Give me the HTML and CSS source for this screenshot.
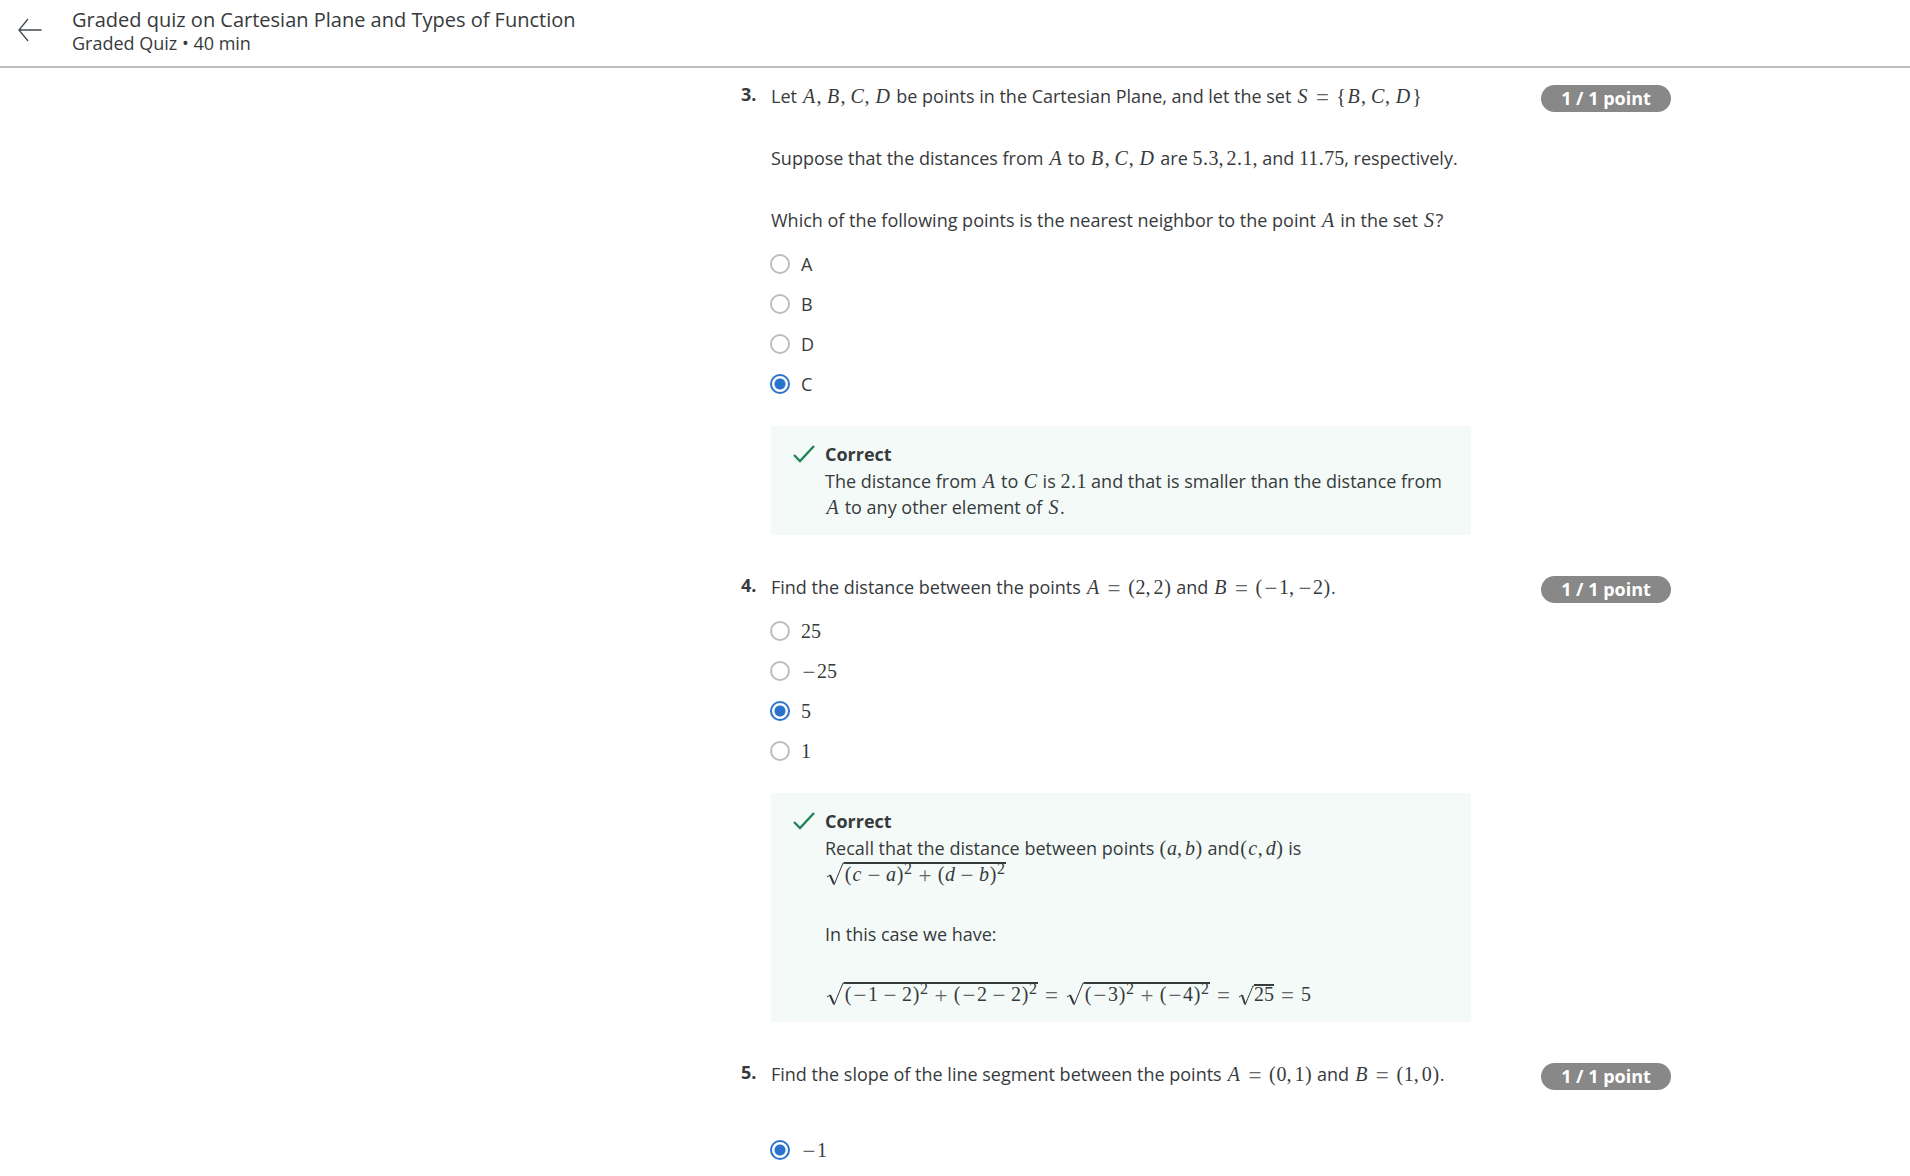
FILE: index.html
```html
<!DOCTYPE html>
<html lang="en">
<head>
<meta charset="utf-8">
<meta name="viewport" content="width=device-width, initial-scale=1">
<title>Graded quiz on Cartesian Plane and Types of Function</title>
<link rel="stylesheet" href="styles.css">
</head>
<body>
<header class="topbar">
  <button class="back" type="button" aria-label="Back">
    <svg width="24" height="28" viewBox="0 0 24 28" fill="none" stroke="#444b52" stroke-width="1.3"><path d="M23.500 14H1M10 3L1 14L10 25"/></svg>
  </button>
  <div>
    <h1 class="title">Graded quiz on Cartesian Plane and Types of Function</h1>
    <p class="subtitle">Graded Quiz • 40 min</p>
  </div>
</header>

<main class="page">
  <div class="quiz">
    <section class="question">
      <div class="number">3.</div>
      <div class="body">
        <div class="prompt">
          <p>Let <span class="math"><i>A</i><b>,</b><i>B</i><b>,</b><i>C</i><b>,</b><i class="wide">D</i></span> be points in the Cartesian Plane, and let the set <span class="math"><i class="slim">S</i><span class="rel">=</span><span class="brace">{</span><i>B</i><b>,</b><i>C</i><b>,</b><i class="wide">D</i><span class="brace">}</span></span></p>
          <p>Suppose that the distances from <span class="math"><i>A</i></span> to <span class="math"><i>B</i><b>,</b><i>C</i><b>,</b><i class="wide">D</i></span> are <span class="math">5<span class="dot">.</span>3<b>,</b>2<span class="dot">.</span>1,</span> and <span class="math">11<span class="dot">.</span>75</span>, respectively.</p>
          <p>Which of the following points is the nearest neighbor to the point <span class="math"><i>A</i></span> in the set <span class="math"><i class="slim">S</i></span>?</p>
        </div>
        <div class="options">
          <label class="option"><input type="radio" name="q3"><span>A</span></label>
          <label class="option"><input type="radio" name="q3"><span>B</span></label>
          <label class="option"><input type="radio" name="q3"><span>D</span></label>
          <label class="option"><input type="radio" name="q3" checked><span>C</span></label>
        </div>
        <div class="feedback">
          <svg class="check" width="22" height="18" viewBox="0 0 22 18" fill="none" stroke="#1f8354" stroke-width="2.300"><path d="M1 10L7 16L21 1"/></svg>
          <div>
            <h2 class="verdict">Correct</h2>
            <p>The distance from <span class="math"><i>A</i></span> to <span class="math"><i>C</i></span> is <span class="math">2<span class="dot">.</span>1</span> and that is smaller than the distance from <span class="math"><i>A</i></span> to any other element of <span class="math"><i class="slim">S</i></span>.</p>
          </div>
        </div>
      </div>
      <div class="points">1 / 1 point</div>
    </section>

    <section class="question">
      <div class="number">4.</div>
      <div class="body">
        <div class="prompt">
          <p>Find the distance between the points <span class="math"><i>A</i><span class="rel">=</span><span class="par">(</span>2<b>,</b>2<span class="par">)</span></span> and <span class="math"><i>B</i><span class="rel">=</span><span class="par">(</span><span class="neg">−</span>1<b>,</b><span class="neg">−</span>2<span class="par">)</span></span>.</p>
        </div>
        <div class="options">
          <label class="option"><input type="radio" name="q4"><span class="math">25</span></label>
          <label class="option"><input type="radio" name="q4"><span class="math"><span class="neg">−</span>25</span></label>
          <label class="option"><input type="radio" name="q4" checked><span class="math">5</span></label>
          <label class="option"><input type="radio" name="q4"><span class="math">1</span></label>
        </div>
        <div class="feedback">
          <svg class="check" width="22" height="18" viewBox="0 0 22 18" fill="none" stroke="#1f8354" stroke-width="2.300"><path d="M1 10L7 16L21 1"/></svg>
          <div>
            <h2 class="verdict">Correct</h2>
            <p>Recall that the distance between points <span class="math"><span class="par">(</span><i class="low">a</i><b>,</b><i class="low">b</i><span class="par">)</span></span> and<span class="math"><span class="par">(</span><i class="low">c</i><b>,</b><i class="low">d</i><span class="par">)</span></span> is<br><span class="math"><svg class="radical" width="18" height="24" viewBox="0 0 18 24" fill="none" stroke="#373a3c"><path d="M1 15L4 13"/><path d="M4 13L8 22" stroke-width="2"/><path d="M8 23L17 1H18"/></svg><span class="root"><span class="par">(</span><i class="low">c</i><span class="bin">−</span><i class="low">a</i><span class="par">)</span><sup>2</sup><span class="bin">+</span><span class="par">(</span><i class="low">d</i><span class="bin">−</span><i class="low">b</i><span class="par">)</span><sup>2</sup></span></span></p>
            <p>In this case we have:</p>
            <p><span class="math"><svg class="radical" width="18" height="24" viewBox="0 0 18 24" fill="none" stroke="#373a3c"><path d="M1 15L4 13"/><path d="M4 13L8 22" stroke-width="2"/><path d="M8 23L17 1H18"/></svg><span class="root"><span class="par">(</span><span class="neg">−</span>1<span class="bin">−</span>2<span class="par">)</span><sup>2</sup><span class="bin">+</span><span class="par">(</span><span class="neg">−</span>2<span class="bin">−</span>2<span class="par">)</span><sup>2</sup></span><span class="rel">=</span><svg class="radical" width="18" height="24" viewBox="0 0 18 24" fill="none" stroke="#373a3c"><path d="M1 15L4 13"/><path d="M4 13L8 22" stroke-width="2"/><path d="M8 23L17 1H18"/></svg><span class="root"><span class="par">(</span><span class="neg">−</span>3<span class="par">)</span><sup>2</sup><span class="bin">+</span><span class="par">(</span><span class="neg">−</span>4<span class="par">)</span><sup>2</sup></span><span class="rel">=</span><svg class="radical" width="16" height="21" viewBox="0 0 16 21" fill="none" stroke="#373a3c"><path d="M1 12L4 10"/><path d="M4 10L7 19" stroke-width="2"/><path d="M7 20L15 1H16"/></svg><span class="root short">25</span><span class="rel">=</span>5</span></p>
          </div>
        </div>
      </div>
      <div class="points">1 / 1 point</div>
    </section>

    <section class="question">
      <div class="number">5.</div>
      <div class="body">
        <div class="prompt">
          <p>Find the slope of the line segment between the points <span class="math"><i>A</i><span class="rel">=</span><span class="par">(</span>0<b>,</b>1<span class="par">)</span></span> and <span class="math"><i>B</i><span class="rel">=</span><span class="par">(</span>1<b>,</b>0<span class="par">)</span></span>.</p>
        </div>
        <div class="options spaced">
          <label class="option"><input type="radio" name="q5" checked><span class="math"><span class="neg">−</span>1</span></label>
        </div>
      </div>
      <div class="points">1 / 1 point</div>
    </section>
  </div>
</main>
</body>
</html>
```
FILE: styles.css
```css
* { box-sizing: border-box; }

body {
  margin: 0;
  background: #fff;
  color: #373a3c;
  font: 18px/27px "Open Sans", "Noto Sans", sans-serif;
}

h1, h2, p { margin: 0; }

.topbar {
  display: flex;
  align-items: flex-start;
  gap: 30px;
  padding: 8px 18px 12px;
  border-bottom: 2px solid #bbb;
}

.back {
  display: flex;
  padding: 8px 0 0;
  border: 0;
  background: none;
}

.title {
  font-size: 20px;
  font-weight: 400;
  line-height: 24px;
}

.subtitle { line-height: 22px; }

/* The quiz column sits right of centre, beside the free navigation space */
.page {
  display: grid;
  grid-template-columns: 741fr minmax(0, 930px) 239fr;
  padding-top: 15px;
}

.quiz {
  grid-column: 2;
  display: flex;
  flex-direction: column;
  gap: 39px;
}

.question {
  display: grid;
  grid-template-columns: 30px minmax(0, 700px) 1fr;
  align-items: start;
}

.number {
  font-weight: 700;
  line-height: 22px;
}

.prompt {
  display: flex;
  flex-direction: column;
  gap: 35px;
}

.points {
  width: 130px;
  margin: 2px 0 0 auto;
  border-radius: 14px;
  background: #888;
  color: #fff;
  font-weight: 700;
  text-align: center;
}

.options { padding-top: 10px; }
.options.spaced { padding-top: 42px; }

.option {
  display: flex;
  align-items: center;
  gap: 11px;
  height: 40px;
}

.option input {
  appearance: none;
  width: 20px;
  height: 20px;
  margin: 0 0 0 -1px;
  border: 2px solid #bdbdbd;
  border-radius: 50%;
}

.option input:checked {
  border-color: #2a73cc;
  background: radial-gradient(circle, #2a73cc 5px, transparent 6px);
}

.feedback {
  display: flex;
  gap: 10px;
  margin-top: 22px;
  padding: 15px 15px 15px 22px;
  background: #f4faf8;
  line-height: 26px;
}

.check {
  flex: none;
  margin-top: 4px;
}

.verdict {
  font-size: 18px;
  font-weight: 700;
  line-height: 27px;
}

.feedback p + p { margin-top: 34px; }

/* Formulas */
.math {
  font-family: "Liberation Serif", serif;
  font-size: 20px;
  line-height: 20px;
  white-space: nowrap;
}

.math i,
.math b,
.math span {
  display: inline-block;
  font-weight: 400;
  text-align: center;
}

.math i { width: 15px; }
.math i.wide { width: 18px; }
.math i.slim { width: 13px; }
.math i.low { width: 10px; }
.math b { width: 8px; text-align: left; }
.math i:not(.low) + b { width: 9px; }
.math .dot { width: 6px; }
.math .par { width: 8px; }
.math .brace { width: 10px; }
.math .neg { width: 16px; }
.math .bin { width: 24px; }
.math .rel { width: 27px; }

.math .neg,
.math .bin,
.math .rel {
  color: #666;
  font-size: 23px;
  line-height: 14px;
  vertical-align: -2px;
}

.math sup {
  font-size: 16px;
  line-height: 0;
  vertical-align: 7px;
  padding-right: 1px;
}

.math .root { border-top: 2px solid #373a3c; }
.math .short { line-height: 16px; }

.radical {
  margin-left: 1px;
  vertical-align: -5px;
}
```
